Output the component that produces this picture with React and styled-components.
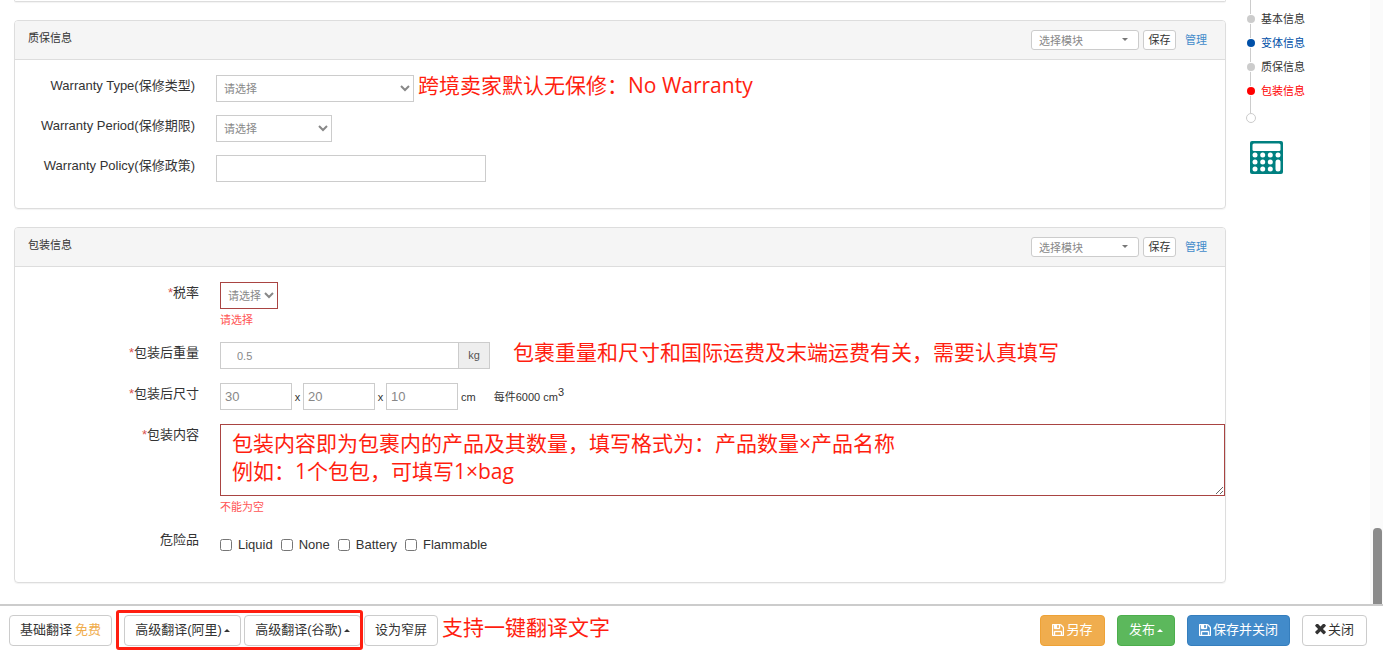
import React from "react";
import styled, { createGlobalStyle } from "styled-components";

const GlobalStyle = createGlobalStyle`
  * {
    box-sizing: border-box;
  }

  body {
    margin: 0;
    background: #fff;
    color: #333;
    font-family: "Liberation Sans", "Noto Sans CJK SC", sans-serif;
    font-size: 13px;
    line-height: 20px;
  }

  button,
  input,
  select,
  textarea {
    margin: 0;
    font-family: inherit;
  }
`;

const SECTIONS = [
  { name: "基本信息" },
  { name: "变体信息", color: "#0050a8" },
  { name: "质保信息" },
  { name: "包装信息", color: "#ff0000" },
];

const DANGEROUS = ["Liquid", "None", "Battery", "Flammable"];

const SaveIcon = () => (
  <Icon viewBox="128 128 1536 1536" aria-hidden="true">
    <path
      d="M512 1536h768v-384h-768v384zm896 0h128v-896q0-14-10-38.5t-20-34.5l-281-281q-10-10-34-20t-39-10v416q0 40-28 68t-68 28h-576q-40 0-68-28t-28-68v-416h-128v1280h128v-416q0-40 28-68t68-28h832q40 0 68 28t28 68v416zm-384-928v-320q0-13-9.5-22.5t-22.5-9.5h-192q-13 0-22.5 9.5t-9.5 22.5v320q0 13 9.5 22.5t22.5 9.5h192q13 0 22.5-9.5t9.5-22.5zm640 32v928q0 40-28 68t-68 28h-1344q-40 0-68-28t-28-68v-1344q0-40 28-68t68-28h928q40 0 88 20t76 48l280 280q28 28 48 76t20 88z"
      stroke="currentColor"
      strokeWidth="50"
    />
  </Icon>
);

const CloseIcon = () => (
  <Icon viewBox="280 412 1230 1230" aria-hidden="true" $small>
    <path d="M1490 1322q0 40-28 68l-136 136q-28 28-68 28t-68-28l-294-294-294 294q-28 28-68 28t-68-28l-136-136q-28-28-28-68t28-68l294-294-294-294q-28-28-28-68t28-68l136-136q28-28 68-28t68 28l294 294 294-294q28-28 68-28t68 28l136 136q28 28 28 68t-28 68l-294 294 294 294q28 28 28 68z" />
  </Icon>
);

const Calculator = () => (
  <svg width="33" height="33" viewBox="0 0 33 33" aria-hidden="true">
    <rect width="33" height="33" rx="2" fill="#008080" />
    <rect x="2.5" y="2.5" width="28" height="7.5" rx="1.5" fill="#fff" />
    {[14, 21, 28].map((cy) =>
      [5, 12.7, 20.3].map((cx) => (
        <circle key={`${cx}-${cy}`} cx={cx} cy={cy} r="2.5" fill="#fff" />
      ))
    )}
    <circle cx="28" cy="14" r="2.5" fill="#fff" />
    <rect x="25.5" y="18.5" width="5" height="12" rx="2.5" fill="#fff" />
  </svg>
);

const Panel = ({ title, children }) => (
  <Card>
    <CardHeader>
      <CardTitle>{title}</CardTitle>
      <ModulePicker>
        <ModuleSelect aria-label={`${title} 选择模块`}>
          <option>选择模块</option>
        </ModuleSelect>
      </ModulePicker>
      <SmallButton type="button">保存</SmallButton>
      <ManageLink href="#">管理</ManageLink>
    </CardHeader>
    {children}
  </Card>
);

const App = () => (
  <Page>
    <GlobalStyle />
    <Content>
      <Main>
        <PreviousCard />
        <Panel title="质保信息">
          <Fields $labels={180} $gap={13}>
            <Label htmlFor="warranty-type">Warranty Type(保修类型)</Label>
            <Line>
              <Select id="warranty-type" $width={198}>
                <option>请选择</option>
              </Select>
              <Note $space={4}>跨境卖家默认无保修：No Warranty</Note>
            </Line>
            <Label htmlFor="warranty-period">Warranty Period(保修期限)</Label>
            <Line>
              <Select id="warranty-period" $width={116}>
                <option>请选择</option>
              </Select>
            </Line>
            <Label htmlFor="warranty-policy">Warranty Policy(保修政策)</Label>
            <Line>
              <Input id="warranty-policy" type="text" $width={270} />
            </Line>
          </Fields>
        </Panel>

        <Panel title="包装信息">
          <Fields $labels={184} $gap={14}>
            <Label htmlFor="tax">
              <Star>*</Star>税率
            </Label>
            <div>
              <Line>
                <Select id="tax" $width={58} $invalid>
                  <option>请选择</option>
                </Select>
              </Line>
              <ErrorText>请选择</ErrorText>
            </div>

            <Label htmlFor="weight">
              <Star>*</Star>包装后重量
            </Label>
            <Line>
              <WeightInput
                id="weight"
                type="text"
                defaultValue="0.5"
                $width={238}
              />
              <Unit>kg</Unit>
              <Note $space={23}>
                包裹重量和尺寸和国际运费及末端运费有关，需要认真填写
              </Note>
            </Line>

            <Label htmlFor="length">
              <Star>*</Star>包装后尺寸
            </Label>
            <Line>
              <Input id="length" type="text" defaultValue="30" $width={72} />
              <Times>x</Times>
              <Input
                type="text"
                aria-label="宽"
                defaultValue="20"
                $width={72}
              />
              <Times>x</Times>
              <Input
                type="text"
                aria-label="高"
                defaultValue="10"
                $width={72}
              />
              <Measure $space={3}>cm</Measure>
              <Measure $space={18}>
                每件6000 cm<sup>3</sup>
              </Measure>
            </Line>

            <Label htmlFor="package-content">
              <Star>*</Star>包装内容
            </Label>
            <div>
              <TextArea
                id="package-content"
                spellCheck={false}
                defaultValue={
                  "包装内容即为包裹内的产品及其数量，填写格式为：产品数量×产品名称\n例如：1个包包，可填写1×bag"
                }
              />
              <ErrorText>不能为空</ErrorText>
            </div>

            <Label as="span" id="dangerous">
              危险品
            </Label>
            <Checks role="group" aria-labelledby="dangerous">
              {DANGEROUS.map((name) => (
                <Check key={name}>
                  <input type="checkbox" />
                  {name}
                </Check>
              ))}
            </Checks>
          </Fields>
        </Panel>
      </Main>

      <Side>
        <Steps>
          {SECTIONS.map((section) => (
            <Step key={section.name} $color={section.color}>
              <a href="#">{section.name}</a>
            </Step>
          ))}
        </Steps>
        <EndDot />
        <Calculator />
      </Side>

      <Track>
        <Thumb />
      </Track>
    </Content>

    <Footer>
      <Button type="button" $width={103}>
        基础翻译 <Free>免费</Free>
      </Button>
      <Highlight>
        <Button type="button" $width={117}>
          高级翻译(阿里)
          <Caret />
        </Button>
        <Button type="button" $width={117}>
          高级翻译(谷歌)
          <Caret />
        </Button>
      </Highlight>
      <Button type="button" $width={74}>
        设为窄屏
      </Button>
      <Note $space={4}>支持一键翻译文字</Note>
      <Actions>
        <Button type="button" $width={65} $bg="#f0ad4e" $edge="#eea236">
          <SaveIcon />
          另存
        </Button>
        <Button type="button" $width={58} $bg="#5cb85c" $edge="#4cae4c">
          发布
          <Caret />
        </Button>
        <Button type="button" $width={103} $bg="#428bca" $edge="#357ebd">
          <SaveIcon />
          保存并关闭
        </Button>
        <Button type="button" $width={65}>
          <CloseIcon />
          关闭
        </Button>
      </Actions>
    </Footer>
  </Page>
);

const Page = styled.div`
  display: flex;
  flex-direction: column;
  min-height: 100vh;
`;

const Content = styled.div`
  display: flex;
  flex: 1;
`;

const Main = styled.main`
  display: flex;
  flex: 1;
  flex-direction: column;
  gap: 18px;
  min-width: 0;
  padding: 0 20px 20px 14px;
`;

const Card = styled.section`
  border: 1px solid #ddd;
  border-radius: 4px;
  box-shadow: 0 1px 1px rgba(0, 0, 0, 0.05);
`;

const PreviousCard = styled(Card)`
  height: 2px;
  border-top: 0;
  border-radius: 0 0 4px 4px;
`;

const CardHeader = styled.header`
  display: flex;
  align-items: flex-start;
  padding: 9px 18px 9px 13px;
  border-bottom: 1px solid #ddd;
  border-radius: 3px 3px 0 0;
  background: #f5f5f5;
`;

const CardTitle = styled.h2`
  flex: 1;
  margin: 0;
  font-size: 11px;
  font-weight: 400;
  line-height: 16px;
`;

const ModulePicker = styled.div`
  position: relative;
  display: flex;
  margin-right: 4px;

  &::after {
    content: "";
    position: absolute;
    top: 8px;
    right: 11px;
    border: 3px solid transparent;
    border-top-color: #777;
    border-bottom: 0;
    pointer-events: none;
  }
`;

const ModuleSelect = styled.select`
  appearance: none;
  width: 108px;
  height: 20px;
  padding: 1px 7px 0;
  border: 1px solid #ccc;
  border-radius: 3px;
  background: #fff;
  color: #888;
  font-size: 11px;
`;

const SmallButton = styled.button`
  width: 33px;
  height: 20px;
  padding: 0;
  border: 1px solid #ccc;
  border-radius: 3px;
  background: #fff;
  color: #333;
  font-size: 11px;
  line-height: 18px;
`;

const ManageLink = styled.a`
  margin-left: 9px;
  color: #428bca;
  font-size: 11px;
  text-decoration: none;
`;

const Fields = styled.div`
  display: grid;
  grid-template-columns: ${(props) => props.$labels}px minmax(0, 1fr);
  gap: ${(props) => props.$gap}px 21px;
  padding: 15px 0 26px;
`;

const Label = styled.label`
  padding-top: 1px;
  text-align: right;
`;

const Star = styled.span`
  color: #d9534f;
`;

const Line = styled.div`
  display: flex;
  align-items: center;
  height: 27px;
`;

const Select = styled.select`
  width: ${(props) => props.$width}px;
  height: 27px;
  padding: 0 0 0 3px;
  border: 1px solid ${(props) => (props.$invalid ? "#a94442" : "#ccc")};
  border-radius: 0;
  background: #fff;
  color: #888;
  font-size: 11px;
`;

const Input = styled.input`
  width: ${(props) => props.$width}px;
  height: 27px;
  padding: 0 4px;
  border: 1px solid #ccc;
  color: #888;
  font-size: 13px;
`;

const WeightInput = styled(Input)`
  padding: 0 16px;
  border-right: 0;
  font-size: 11px;
`;

const Unit = styled.span`
  width: 32px;
  height: 27px;
  border: 1px solid #ccc;
  background: #eee;
  color: #555;
  font-size: 11px;
  line-height: 25px;
  text-align: center;
`;

const Times = styled.span`
  width: 11px;
  font-size: 11px;
  text-align: center;
`;

const Measure = styled.span`
  margin-left: ${(props) => props.$space}px;
  font-size: 11px;

  sup {
    font-size: 11px;
    line-height: 0;
  }
`;

const Note = styled.span`
  margin-left: ${(props) => props.$space}px;
  padding-bottom: 7px;
  color: #ff1e10;
  font-family: "Open Sans", "Noto Sans CJK SC", sans-serif;
  font-size: 21px;
  line-height: 24px;
  white-space: nowrap;
`;

const TextArea = styled.textarea`
  display: block;
  width: 100%;
  height: 72px;
  padding: 4px 11px;
  border: 1px solid #a94442;
  color: #ff1e10;
  font-family: "Open Sans", "Noto Sans CJK SC", sans-serif;
  font-size: 21px;
  line-height: 28px;
  overflow: hidden;
`;

const ErrorText = styled.div`
  padding-top: 3px;
  color: #ff5555;
  font-size: 11px;
  line-height: 16px;
`;

const Checks = styled.div`
  display: flex;
  gap: 8px;
  padding: 6px 0 1px;
`;

const Check = styled.label`
  display: flex;
  align-items: center;
  gap: 6px;

  input {
    width: 12px;
    height: 12px;
  }
`;

const Side = styled.aside`
  width: 124px;

  svg {
    display: block;
    margin: 18px 0 0 4px;
  }
`;

const Steps = styled.ul`
  margin: 0;
  padding: 7px 0 10px 1px;
  background: linear-gradient(#ccc, #ccc) 4px 0 / 1px 100% no-repeat;
  list-style: none;
`;

const Step = styled.li`
  display: flex;
  align-items: center;
  gap: 6px;
  height: 24px;

  &::before {
    content: "";
    width: 8px;
    height: 8px;
    border-radius: 50%;
    background: ${(props) => props.$color || "#ccc"};
    box-shadow: 0 0 0 1px #fff;
  }

  a {
    color: ${(props) => props.$color || "#333"};
    font-size: 11px;
    text-decoration: none;
  }
`;

const EndDot = styled.div`
  width: 10px;
  height: 10px;
  border: 1px solid #ccc;
  border-radius: 50%;
`;

const Track = styled.div`
  display: flex;
  align-items: flex-end;
  width: 13px;
  padding: 0 1px 0 3px;
  background: #fafafa;
`;

const Thumb = styled.div`
  width: 9px;
  height: 76px;
  border-radius: 4px 4px 0 0;
  background: #8b8b8b;
`;

const Footer = styled.footer`
  display: flex;
  align-items: center;
  padding: 9px 16px 6px 9px;
  border-top: 2px solid #ccc;
  background: #fff;
`;

const Button = styled.button`
  display: flex;
  align-items: center;
  justify-content: center;
  gap: 2px;
  width: ${(props) => props.$width}px;
  height: 31px;
  padding: 0 0 4px;
  border: 1px solid ${(props) => props.$edge || "#ccc"};
  border-radius: 4px;
  background: ${(props) => props.$bg || "#fff"};
  color: ${(props) => (props.$bg ? "#fff" : "#333")};
  font-size: 13px;
  white-space: nowrap;
`;

const Free = styled.span`
  margin-left: 1px;
  color: #f0ad4e;
`;

const Caret = styled.span`
  margin: 4px 0 0;
  border: 3px solid transparent;
  border-top: 0;
  border-bottom-color: currentColor;
`;

const Icon = styled.svg`
  width: ${(props) => (props.$small ? 11 : 12)}px;
  height: ${(props) => (props.$small ? 11 : 12)}px;
  margin-top: 2px;
  fill: currentColor;
`;

const Highlight = styled.div`
  position: relative;
  display: flex;
  gap: 3px;
  margin: 0 3px 0 12px;

  &::after {
    content: "";
    position: absolute;
    inset: -5px -2px -4px -8px;
    border: 3px solid #ff1e10;
    border-radius: 3px;
    pointer-events: none;
  }
`;

const Actions = styled.div`
  display: flex;
  gap: 12px;
  margin-left: auto;
`;

export default App;
